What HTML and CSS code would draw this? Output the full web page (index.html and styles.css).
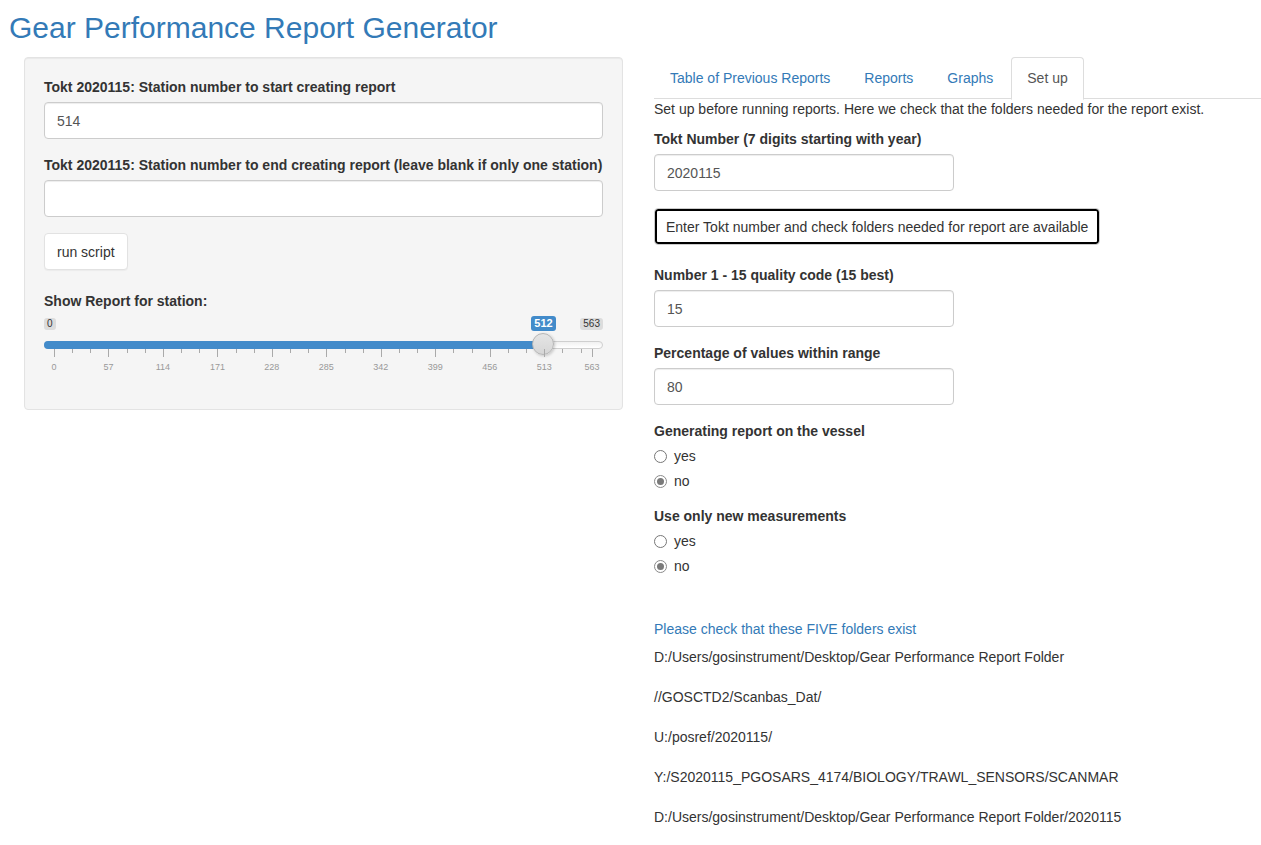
FILE: index.html
```html
<!DOCTYPE html>
<html>
<head>
<meta charset="utf-8">
<title>Gear Performance Report Generator</title>
<link rel="stylesheet" href="styles.css">
</head>
<body>
<h2 class="title">Gear Performance Report Generator</h2>
<div class="layout">
  <div class="sidebar">
    <div class="well">
      <div class="form-group">
        <label class="ctl-label">Tokt 2020115: Station number to start creating report</label>
        <input class="form-control" type="text" value="514">
      </div>
      <div class="form-group">
        <label class="ctl-label">Tokt 2020115: Station number to end creating report (leave blank if only one station)</label>
        <input class="form-control" type="text" value="">
      </div>
      <button class="btn btn-run">run script</button>
      <div class="form-group slider-group">
        <label class="ctl-label">Show Report for station:</label>
        <div class="slider">
          <span class="irs-min">0</span>
          <span class="irs-single">512</span>
          <span class="irs-max">563</span>
          <div class="irs-line"></div>
          <div class="irs-bar" style="width:499px"></div>
          <div class="irs-handle" style="left:488px"></div>
          <div class="irs-grid">
            <span class="tick big" style="left:0%"></span>
            <span class="tick" style="left:3.375%"></span>
            <span class="tick" style="left:6.75%"></span>
            <span class="tick big" style="left:10.124%"></span>
            <span class="tick" style="left:13.499%"></span>
            <span class="tick" style="left:16.874%"></span>
            <span class="tick big" style="left:20.249%"></span>
            <span class="tick" style="left:23.624%"></span>
            <span class="tick" style="left:26.999%"></span>
            <span class="tick big" style="left:30.373%"></span>
            <span class="tick" style="left:33.748%"></span>
            <span class="tick" style="left:37.123%"></span>
            <span class="tick big" style="left:40.497%"></span>
            <span class="tick" style="left:43.872%"></span>
            <span class="tick" style="left:47.247%"></span>
            <span class="tick big" style="left:50.622%"></span>
            <span class="tick" style="left:53.997%"></span>
            <span class="tick" style="left:57.371%"></span>
            <span class="tick big" style="left:60.746%"></span>
            <span class="tick" style="left:64.121%"></span>
            <span class="tick" style="left:67.496%"></span>
            <span class="tick big" style="left:70.870%"></span>
            <span class="tick" style="left:74.245%"></span>
            <span class="tick" style="left:77.620%"></span>
            <span class="tick big" style="left:80.995%"></span>
            <span class="tick" style="left:84.370%"></span>
            <span class="tick" style="left:87.745%"></span>
            <span class="tick big" style="left:91.119%"></span>
            <span class="tick" style="left:94.494%"></span>
            <span class="tick" style="left:97.869%"></span>
            <span class="tick big" style="left:100%"></span>
            <span class="grid-text" style="left:0%">0</span>
            <span class="grid-text" style="left:10.124%">57</span>
            <span class="grid-text" style="left:20.249%">114</span>
            <span class="grid-text" style="left:30.373%">171</span>
            <span class="grid-text" style="left:40.497%">228</span>
            <span class="grid-text" style="left:50.622%">285</span>
            <span class="grid-text" style="left:60.746%">342</span>
            <span class="grid-text" style="left:70.870%">399</span>
            <span class="grid-text" style="left:80.995%">456</span>
            <span class="grid-text" style="left:91.119%">513</span>
            <span class="grid-text" style="left:100%">563</span>
          </div>
        </div>
      </div>
    </div>
  </div>
  <div class="main">
    <ul class="nav-tabs">
      <li><a>Table of Previous Reports</a></li>
      <li><a>Reports</a></li>
      <li><a>Graphs</a></li>
      <li class="active"><a>Set up</a></li>
    </ul>
    <div class="tab-content">
      <div class="intro">Set up before running reports. Here we check that the folders needed for the report exist.</div>
      <div class="form-group tokt">
        <label class="ctl-label">Tokt Number (7 digits starting with year)</label>
        <input class="form-control narrow" type="text" value="2020115">
      </div>
      <button class="btn btn-check">Enter Tokt number and check folders needed for report are available</button>
      <div class="form-group">
        <label class="ctl-label">Number 1 - 15 quality code (15 best)</label>
        <input class="form-control narrow" type="text" value="15">
      </div>
      <div class="form-group">
        <label class="ctl-label">Percentage of values within range</label>
        <input class="form-control narrow" type="text" value="80">
      </div>
      <div class="form-group radio-group">
        <label class="ctl-label">Generating report on the vessel</label>
        <div class="radio"><span class="rb"></span><span>yes</span></div>
        <div class="radio"><span class="rb checked"></span><span>no</span></div>
      </div>
      <div class="form-group radio-group">
        <label class="ctl-label">Use only new measurements</label>
        <div class="radio"><span class="rb"></span><span>yes</span></div>
        <div class="radio"><span class="rb checked"></span><span>no</span></div>
      </div>
      <div class="folders-title">Please check that these FIVE folders exist</div>
      <div class="folder">D:/Users/gosinstrument/Desktop/Gear Performance Report Folder</div>
      <div class="folder">//GOSCTD2/Scanbas_Dat/</div>
      <div class="folder">U:/posref/2020115/</div>
      <div class="folder">Y:/S2020115_PGOSARS_4174/BIOLOGY/TRAWL_SENSORS/SCANMAR</div>
      <div class="folder">D:/Users/gosinstrument/Desktop/Gear Performance Report Folder/2020115</div>
    </div>
  </div>
</div>
</body>
</html>
```
FILE: styles.css
```css
* { box-sizing: border-box; }
body {
  margin: 0;
  font-family: "Liberation Sans", Arial, sans-serif;
  font-size: 14px;
  line-height: 20px;
  color: #333;
  background: #fff;
}
.title {
  margin: 0;
  padding: 11px 0 0 9px;
  height: 57px;
  font-size: 30px;
  line-height: 33px;
  font-weight: normal;
  color: #337ab7;
}
.layout {
  display: grid;
  grid-template-columns: 599px 1fr;
  column-gap: 31px;
  padding-left: 24px;
}
.well {
  background: #f5f5f5;
  border: 1px solid #e3e3e3;
  border-radius: 4px;
  padding: 19px 19px 19px 19px;
  box-shadow: inset 0 1px 1px rgba(0,0,0,.05);
  height: 353px;
}
.form-group { margin-bottom: 16px; }
.ctl-label {
  display: block;
  font-weight: bold;
  margin-bottom: 5px;
  color: #333;
}
.form-control {
  display: block;
  width: 100%;
  height: 37px;
  padding: 6px 12px;
  font-family: inherit;
  font-size: 14px;
  color: #555;
  background: #fff;
  border: 1px solid #ccc;
  border-radius: 4px;
  box-shadow: inset 0 1px 1px rgba(0,0,0,.075);
}
.form-control.narrow { width: 300px; }
.btn {
  display: block;
  font-family: inherit;
  font-size: 14px;
  line-height: 20px;
  color: #333;
  background: #fff;
  border-radius: 4px;
  cursor: pointer;
}
.btn-run {
  height: 37px;
  padding: 7px 12px;
  border: 1px solid #e2e2e2;
  box-shadow: 0 1px 1px rgba(0,0,0,.04);
  margin-bottom: 21px;
}
.slider-group { margin-bottom: 0; }
.slider {
  position: relative;
  height: 60px;
}
.irs-min, .irs-max {
  position: absolute;
  top: 2px;
  height: 12px;
  padding: 0 3px;
  font-size: 10px;
  line-height: 12px;
  color: #333;
  background: #dcdcdc;
  border-radius: 3px;
}
.irs-min { left: 0; }
.irs-max { right: 0; }
.irs-single {
  position: absolute;
  left: 487px;
  top: 0;
  width: 25px;
  height: 15px;
  font-size: 11px;
  line-height: 15px;
  font-weight: bold;
  text-align: center;
  color: #fff;
  background: #428bca;
  border-radius: 3px;
}
.irs-line {
  position: absolute;
  left: 0;
  right: 0;
  top: 25px;
  height: 8px;
  border: 1px solid #cfcfcf;
  border-radius: 8px;
  background: linear-gradient(#f0f0f0, #fff);
}
.irs-bar {
  position: absolute;
  left: 0;
  top: 25px;
  height: 8px;
  background: #428bca;
  border-radius: 8px 0 0 8px;
}
.irs-handle {
  position: absolute;
  top: 17px;
  width: 22px;
  height: 22px;
  border: 1px solid #b5b5b5;
  border-radius: 50%;
  background: linear-gradient(#e5e5e5, #d6d6d6);
  box-shadow: 1px 1px 3px rgba(0,0,0,.2);
}
.irs-grid {
  position: absolute;
  left: 10px;
  width: 538px;
  top: 33px;
  height: 30px;
}
.tick {
  position: absolute;
  top: 0;
  width: 1px;
  height: 4px;
  background: #aaa;
}
.tick.big { height: 8px; }
.grid-text {
  position: absolute;
  top: 12px;
  font-size: 9px;
  line-height: 12px;
  color: #999;
  transform: translateX(-50%);
}
.main { min-width: 0; }
.nav-tabs {
  display: flex;
  list-style: none;
  margin: 0;
  padding: 0;
  border-bottom: 1px solid #ddd;
  height: 42px;
}
.nav-tabs li { margin-right: 2px; margin-bottom: -1px; }
.nav-tabs a {
  display: block;
  padding: 10px 15px 11px 15px;
  line-height: 20px;
  color: #337ab7;
  border: 1px solid transparent;
  border-radius: 4px 4px 0 0;
}
.nav-tabs li.active a {
  color: #555;
  background: #fff;
  border-color: #ddd #ddd transparent;
}
.tab-content { padding-top: 0; }
.intro { margin: 0 0 10px 0; }
.form-group.tokt { margin-bottom: 17px; }
.btn-check {
  height: 37px;
  padding: 0 11px;
  border: 1px solid #ccc;
  box-shadow: inset 0 0 0 2px #000;
  margin-bottom: 20px;
}
.radio-group .ctl-label { margin-bottom: 5px; }
.radio {
  display: flex;
  align-items: center;
  height: 20px;
  margin-bottom: 5px;
  color: #333;
}
.rb {
  width: 13px;
  height: 13px;
  border: 1px solid #777;
  border-radius: 50%;
  background: #fff;
  margin-right: 7px;
  position: relative;
}
.rb.checked { border-color: #8a8a8a; }
.rb.checked::after {
  content: "";
  position: absolute;
  left: 2px;
  top: 2px;
  width: 7px;
  height: 7px;
  border-radius: 50%;
  background: #7a7a7a;
}
.form-group.radio-group { margin-bottom: 15px; }
.folders-title {
  margin-top: 43px;
  color: #337ab7;
  margin-bottom: 8px;
}
.folder {
  color: #333;
  margin-bottom: 20px;
}
```
